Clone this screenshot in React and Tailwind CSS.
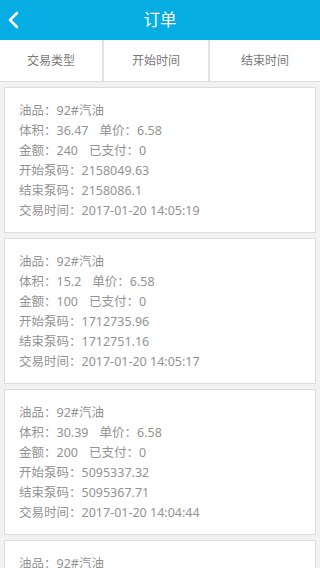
import React from "react";

const orders = [
  { oil: "92#汽油", volume: "36.47", price: "6.58", amount: "240", paid: "0", start: "2158049.63", end: "2158086.1", time: "2017-01-20 14:05:19" },
  { oil: "92#汽油", volume: "15.2", price: "6.58", amount: "100", paid: "0", start: "1712735.96", end: "1712751.16", time: "2017-01-20 14:05:17" },
  { oil: "92#汽油", volume: "30.39", price: "6.58", amount: "200", paid: "0", start: "5095337.32", end: "5095367.71", time: "2017-01-20 14:04:44" },
  { oil: "92#汽油", volume: "20.1", price: "6.58", amount: "132", paid: "0", start: "3301102.4", end: "3301122.5", time: "2017-01-20 14:03:10" },
];

const font = { fontFamily: '"Noto Sans", "Noto Sans CJK SC", sans-serif' };

const OrderCard = ({ order }) => (
  <div className="bg-white border border-[#dcdcdc] pt-[13px] pb-[11px] pl-[14px] text-[12.5px] leading-[20px] text-[#939393]">
    <p>油品：{order.oil}</p>
    <p>
      体积：{order.volume}
      <span className="ml-[11px]">单价：{order.price}</span>
    </p>
    <p>
      金额：{order.amount}
      <span className="ml-[11px]">已支付：{order.paid}</span>
    </p>
    <p>开始泵码：{order.start}</p>
    <p>结束泵码：{order.end}</p>
    <p>交易时间：{order.time}</p>
  </div>
);

export default function App() {
  return (
    <div className="w-[320px] h-[568px] overflow-hidden bg-[#f2f2f2]" style={font}>
      {/* Header */}
      <div className="relative h-[40px] bg-[#05ade3] flex items-center justify-center">
        <button className="absolute left-[6px] top-[11px]">
          <svg width="14" height="18" viewBox="0 0 14 18" fill="none">
            <path d="M11 2 L4 9 L11 16" stroke="white" strokeWidth="2.6" strokeLinecap="round" strokeLinejoin="round" />
          </svg>
        </button>
        <h1 className="text-white text-[16.5px]">订单</h1>
      </div>

      {/* Filter tabs */}
      <div className="flex h-[42px] bg-white border-b border-[#dddddd] text-[12px] text-[#7a7a7a]">
        <div className="w-[104px] flex items-center justify-center border-r-2 border-[#e2e2e2]">交易类型</div>
        <div className="w-[106px] flex items-center justify-center border-r-2 border-[#e2e2e2]">开始时间</div>
        <div className="flex-1 flex items-center justify-center">结束时间</div>
      </div>

      {/* Order list */}
      <div className="flex flex-col gap-[5px] px-[4px] pt-[5px]">
        {orders.map((o, i) => (
          <OrderCard key={i} order={o} />
        ))}
      </div>
    </div>
  );
}
